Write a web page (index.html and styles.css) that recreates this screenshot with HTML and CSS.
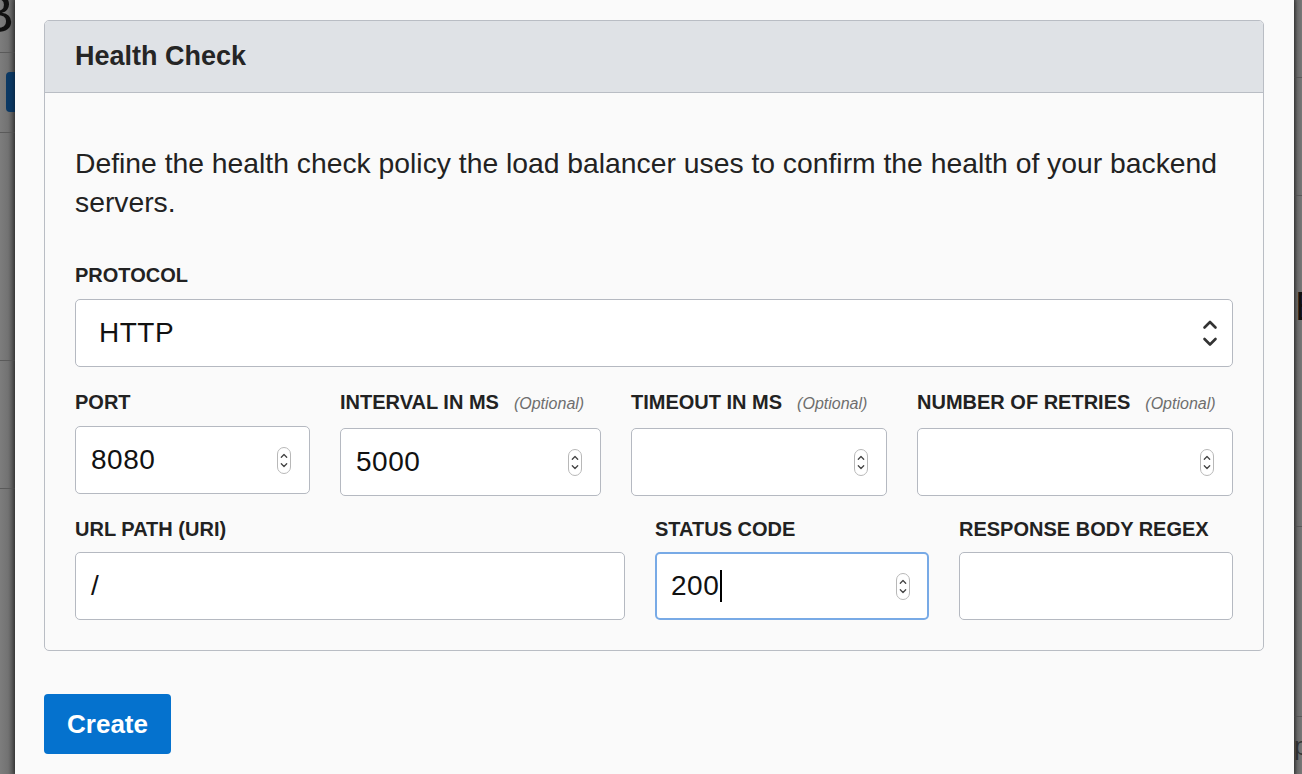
FILE: index.html
```html
<!DOCTYPE html>
<html lang="en">
<head>
<meta charset="utf-8">
<title>Health Check</title>
<link rel="stylesheet" href="styles.css">
</head>
<body>
<div class="page">
  <div class="bg-left">
    <div class="bg-glyph-left"><span>B</span></div>
    <div class="bg-line gl1"></div>
    <div class="bg-blue"></div>
    <div class="bg-line gl2"></div>
    <div class="bg-line gl3"></div>
    <div class="bg-line gl4"></div>
  </div>

  <div class="modal">
    <section class="panel">
      <header class="panel-head">
        <h2 class="panel-title">Health Check</h2>
      </header>
      <div class="panel-body">
        <p class="desc">Define the health check policy the load balancer uses to confirm the health of your backend servers.</p>

        <div class="field protocol">
          <div class="field-label">PROTOCOL</div>
          <div class="input select">
            <span class="value sel-value">HTTP</span>
            <svg class="sel-arrows" width="16" height="30" viewBox="0 0 16 30"><path d="M2.5 9.5 L8 4 L13.5 9.5" fill="none" stroke="#333" stroke-width="2.6" stroke-linecap="round" stroke-linejoin="round"/><path d="M2.5 21 L8 26.5 L13.5 21" fill="none" stroke="#333" stroke-width="2.6" stroke-linecap="round" stroke-linejoin="round"/></svg>
          </div>
        </div>

        <div class="row row-4">
          <div class="field">
            <div class="field-label">PORT</div>
            <div class="input">
              <span class="value">8080</span>
              <svg class="spin" width="14" height="27" viewBox="0 0 14 27"><rect x="0.5" y="0.5" width="13" height="26" rx="6.5" fill="#fff" stroke="#b8b8b8"/><path d="M4.3 10.2 L7 7.5 L9.7 10.2" fill="none" stroke="#444" stroke-width="1.3" stroke-linecap="round" stroke-linejoin="round"/><path d="M4.3 16.8 L7 19.5 L9.7 16.8" fill="none" stroke="#444" stroke-width="1.3" stroke-linecap="round" stroke-linejoin="round"/></svg>
            </div>
          </div>
          <div class="field">
            <div class="field-label">INTERVAL IN MS <span class="opt">(Optional)</span></div>
            <div class="input">
              <span class="value">5000</span>
              <svg class="spin" width="14" height="27" viewBox="0 0 14 27"><rect x="0.5" y="0.5" width="13" height="26" rx="6.5" fill="#fff" stroke="#b8b8b8"/><path d="M4.3 10.2 L7 7.5 L9.7 10.2" fill="none" stroke="#444" stroke-width="1.3" stroke-linecap="round" stroke-linejoin="round"/><path d="M4.3 16.8 L7 19.5 L9.7 16.8" fill="none" stroke="#444" stroke-width="1.3" stroke-linecap="round" stroke-linejoin="round"/></svg>
            </div>
          </div>
          <div class="field">
            <div class="field-label">TIMEOUT IN MS <span class="opt">(Optional)</span></div>
            <div class="input">
              <span class="value"></span>
              <svg class="spin" width="14" height="27" viewBox="0 0 14 27"><rect x="0.5" y="0.5" width="13" height="26" rx="6.5" fill="#fff" stroke="#b8b8b8"/><path d="M4.3 10.2 L7 7.5 L9.7 10.2" fill="none" stroke="#444" stroke-width="1.3" stroke-linecap="round" stroke-linejoin="round"/><path d="M4.3 16.8 L7 19.5 L9.7 16.8" fill="none" stroke="#444" stroke-width="1.3" stroke-linecap="round" stroke-linejoin="round"/></svg>
            </div>
          </div>
          <div class="field">
            <div class="field-label">NUMBER OF RETRIES <span class="opt">(Optional)</span></div>
            <div class="input">
              <span class="value"></span>
              <svg class="spin" width="14" height="27" viewBox="0 0 14 27"><rect x="0.5" y="0.5" width="13" height="26" rx="6.5" fill="#fff" stroke="#b8b8b8"/><path d="M4.3 10.2 L7 7.5 L9.7 10.2" fill="none" stroke="#444" stroke-width="1.3" stroke-linecap="round" stroke-linejoin="round"/><path d="M4.3 16.8 L7 19.5 L9.7 16.8" fill="none" stroke="#444" stroke-width="1.3" stroke-linecap="round" stroke-linejoin="round"/></svg>
            </div>
          </div>
        </div>

        <div class="row row-3">
          <div class="field">
            <div class="field-label">URL PATH (URI)</div>
            <div class="input">
              <span class="value">/</span>
            </div>
          </div>
          <div class="field">
            <div class="field-label">STATUS CODE</div>
            <div class="input focused">
              <span class="value">200<span class="caret"></span></span>
              <svg class="spin" width="14" height="27" viewBox="0 0 14 27"><rect x="0.5" y="0.5" width="13" height="26" rx="6.5" fill="#fff" stroke="#b8b8b8"/><path d="M4.3 10.2 L7 7.5 L9.7 10.2" fill="none" stroke="#444" stroke-width="1.3" stroke-linecap="round" stroke-linejoin="round"/><path d="M4.3 16.8 L7 19.5 L9.7 16.8" fill="none" stroke="#444" stroke-width="1.3" stroke-linecap="round" stroke-linejoin="round"/></svg>
            </div>
          </div>
          <div class="field">
            <div class="field-label">RESPONSE BODY REGEX</div>
            <div class="input">
              <span class="value"></span>
            </div>
          </div>
        </div>
      </div>
    </section>

    <button class="btn-create" type="button">Create</button>
  </div>

  <div class="bg-right">
    <div class="bg-line gr1"></div>
    <div class="bg-line gr2"></div>
    <div class="bg-glyph-right">E</div>
    <div class="bg-line gr3"></div>
    <div class="bg-line gr4"></div>
    <div class="bg-glyph-p">p</div>
  </div>
</div>
</body>
</html>
```

FILE: styles.css
```css
* { box-sizing: border-box; }

html, body {
  margin: 0;
  padding: 0;
  height: 774px;
  overflow: hidden;
}

body {
  font-family: "Liberation Sans", Arial, Helvetica, sans-serif;
  background-color: #777;
  color: #222;
}

.page {
  display: flex;
  height: 774px;
}

/* ---------- dimmed page behind the modal ---------- */
.bg-left {
  width: 15px;
  flex: none;
  overflow: hidden;
  background-color: #747474;
  background-image: linear-gradient(to right, #7d7d7d 0%, #727272 55%, #4c4c4c 100%);
}

.bg-glyph-left {
  height: 40px;
  overflow: hidden;
  display: flex;
  justify-content: flex-end;
}

.bg-glyph-left span {
  font-size: 54px;
  line-height: 1;
  color: #111;
  margin-top: -14px;
  margin-right: 1px;
}

.bg-line {
  height: 1px;
  background-color: #5a5a5a;
}

.gl1 { margin-top: 12px; }

.bg-blue {
  margin-top: 19px;
  margin-left: 6px;
  height: 40px;
  background-color: #0b3863;
  border-radius: 4px 0 0 4px;
}

.gl2 { margin-top: 20px; }
.gl3 { margin-top: 227px; }
.gl4 { margin-top: 127px; }

.bg-right {
  flex: 1;
  overflow: hidden;
  background-color: #6c6c6c;
  background-image: linear-gradient(to right, #4e4e4e 0%, #6c6c6c 45%, #777 100%);
}

.gr1 { margin-top: 77px; }
.gr2 { margin-top: 117px; }

.bg-glyph-right {
  margin-top: 92px;
  height: 36px;
  font-size: 40px;
  line-height: 36px;
  color: #111;
  margin-left: 1px;
}

.gr3 { margin-top: 202px; }
.gr4 { margin-top: 189px; }

.bg-glyph-p {
  margin-top: 14px;
  font-size: 26px;
  line-height: 30px;
  color: #333;
}

/* ---------- modal ---------- */
.modal {
  width: 1279px;
  flex: none;
  background-color: #fafafa;
  padding: 20px 30px 0 29px;
  box-shadow: 0 0 5px rgba(0, 0, 0, 0.55);
  position: relative;
  z-index: 1;
}

.panel {
  border: 1px solid #b9bdc4;
  border-radius: 5px;
  background-color: #fafafa;
}

.panel-head {
  height: 72px;
  background-color: #dfe2e6;
  border-bottom: 1px solid #b9bdc4;
  border-radius: 4px 4px 0 0;
  display: flex;
  align-items: center;
  padding-left: 30px;
}

.panel-title {
  margin: 0;
  font-size: 27px;
  font-weight: bold;
  color: #252525;
}

.panel-body {
  padding: 51px 30px 30px 30px;
}

.desc {
  margin: 0;
  font-size: 28.3px;
  line-height: 39px;
  color: #222;
}

.field-label {
  display: flex;
  align-items: baseline;
  gap: 15px;
  font-size: 20px;
  line-height: 24px;
  font-weight: bold;
  color: #222;
  margin-bottom: 12px;
  white-space: nowrap;
}

.opt {
  font-size: 16px;
  font-style: italic;
  font-weight: normal;
  color: #6e6e6e;
}

.protocol { margin-top: 41px; }

.row {
  display: grid;
  column-gap: 30px;
}

.row-4 {
  margin-top: 23px;
  grid-template-columns: 235px 261px 256px 1fr;
}

.row-3 {
  margin-top: 21px;
  grid-template-columns: 550px 274px 1fr;
}

.row-3 .field-label { margin-bottom: 11px; }

.input {
  height: 68px;
  border: 1px solid #b5b9c1;
  border-radius: 5px;
  background-color: #fff;
  display: flex;
  align-items: center;
  justify-content: space-between;
  padding: 0 18px 0 15px;
  font-size: 28px;
  color: #111;
}

.select { padding: 0 14px 0 23px; }

.value {
  display: flex;
  align-items: center;
  letter-spacing: 0.5px;
}

.spin { flex: none; }
.sel-arrows { flex: none; }

.focused {
  border: 2px solid #78aae6;
  padding: 0 17px 0 14px;
}

.caret {
  display: inline-block;
  width: 2px;
  height: 32px;
  background-color: #000;
  margin-left: 1px;
}

.btn-create {
  margin-top: 43px;
  width: 127px;
  height: 60px;
  background-color: #0572ce;
  color: #fff;
  border: none;
  border-radius: 4px;
  font-family: "Liberation Sans", Arial, sans-serif;
  font-size: 26px;
  font-weight: bold;
  padding: 0;
}
```
